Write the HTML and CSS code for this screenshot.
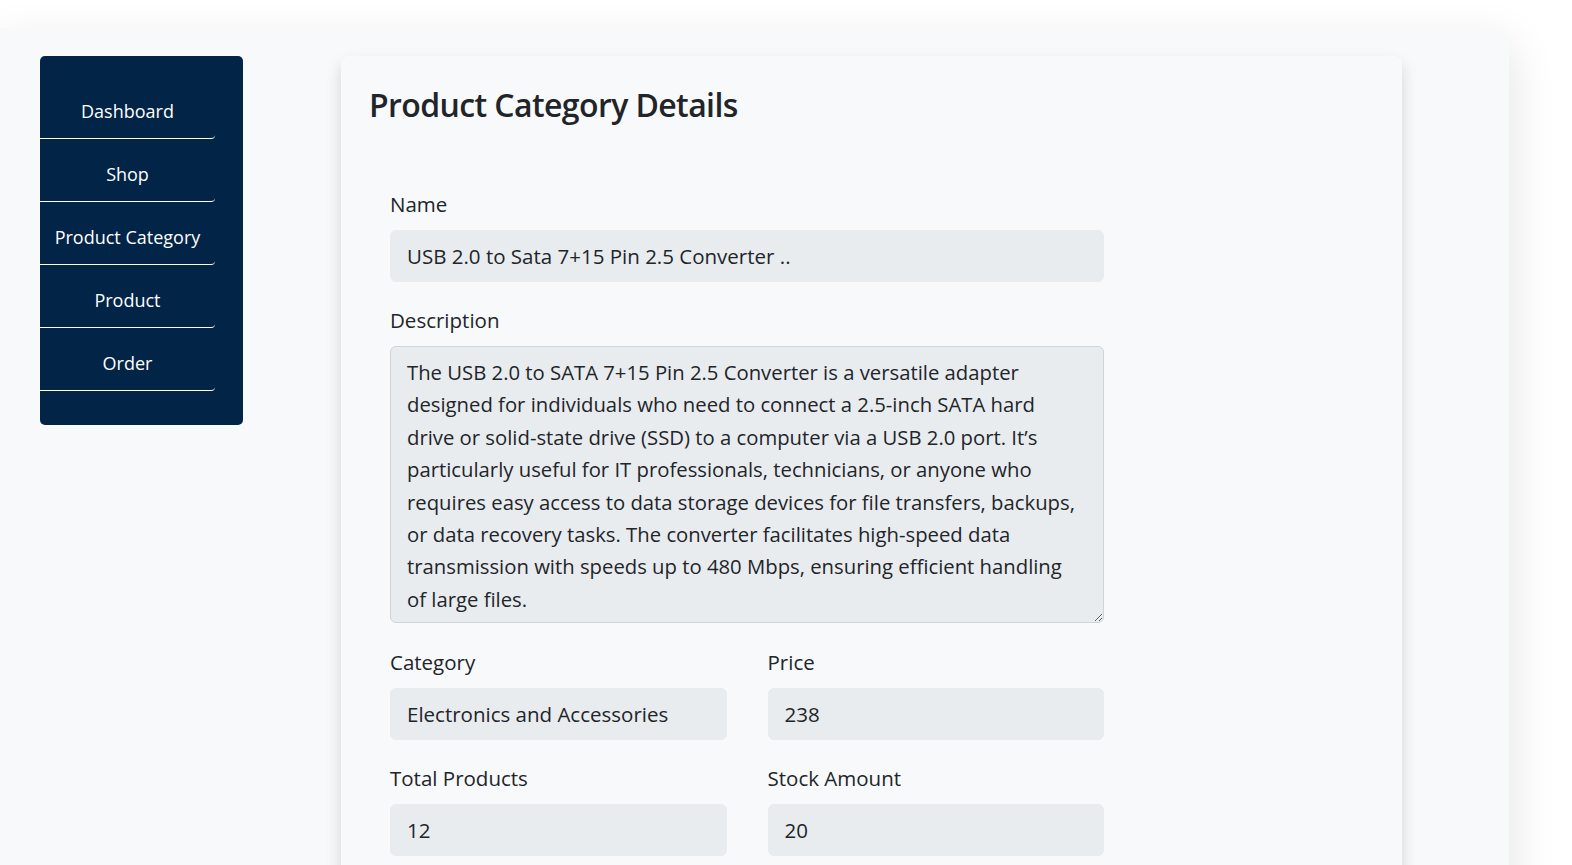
FILE: index.html
```html
<!DOCTYPE html>
<html lang="en">
<head>
<meta charset="utf-8">
<title>Product Category Details</title>
<link rel="stylesheet" href="styles.css">
</head>
<body>
<div class="shell">
  <aside class="sidebar">
    <nav class="nav">
      <a class="nav-item" href="#">Dashboard</a>
      <a class="nav-item" href="#">Shop</a>
      <a class="nav-item" href="#">Product Category</a>
      <a class="nav-item" href="#">Product</a>
      <a class="nav-item" href="#">Order</a>
    </nav>
  </aside>
  <main class="card">
    <h2 class="card-title">Product Category Details</h2>
    <form class="form">
      <div class="group">
        <label class="label">Name</label>
        <input class="control" type="text" readonly value="USB 2.0 to Sata 7+15 Pin 2.5 Converter ..">
      </div>
      <div class="group">
        <label class="label">Description</label>
        <textarea class="control area" readonly>The USB 2.0 to SATA 7+15 Pin 2.5 Converter is a versatile adapter
designed for individuals who need to connect a 2.5-inch SATA hard
drive or solid-state drive (SSD) to a computer via a USB 2.0 port. It’s
particularly useful for IT professionals, technicians, or anyone who
requires easy access to data storage devices for file transfers, backups,
or data recovery tasks. The converter facilitates high-speed data
transmission with speeds up to 480 Mbps, ensuring efficient handling
of large files.</textarea>
      </div>
      <div class="row">
        <div class="group">
          <label class="label">Category</label>
          <input class="control" type="text" readonly value="Electronics and Accessories">
        </div>
        <div class="group">
          <label class="label">Price</label>
          <input class="control" type="text" readonly value="238">
        </div>
      </div>
      <div class="row">
        <div class="group">
          <label class="label">Total Products</label>
          <input class="control" type="text" readonly value="12">
        </div>
        <div class="group">
          <label class="label">Stock Amount</label>
          <input class="control" type="text" readonly value="20">
        </div>
      </div>
    </form>
  </main>
</div>
</body>
</html>
```

FILE: styles.css
```css
* { box-sizing: border-box; }
html, body { margin: 0; padding: 0; background: #ffffff; overflow: hidden; }
body {
  font-family: "Open Sans", "Noto Sans", sans-serif;
  color: #212529;
}
.shell {
  margin-top: 28px;
  width: 1509px;
  min-height: 900px;
  background: #f8f9fa;
  border-radius: 0 10px 0 0;
  box-shadow: 0 1rem 3rem rgba(0, 0, 0, 0.12);
  padding: 28px 0 0 40px;
  display: flex;
  align-items: flex-start;
  gap: 98px;
}
.sidebar {
  width: 203px;
  height: 369px;
  flex: none;
  background: #022447;
  border-radius: 5px;
  padding: 20px 0 0 0;
}
.nav { display: flex; flex-direction: column; width: 175px; }
.nav-item {
  display: block;
  height: 63px;
  padding-top: 21.5px;
  line-height: 27px;
  text-align: center;
  color: #ffffff;
  text-decoration: none;
  font-size: 18px;
  border-bottom: 1px solid #ffffff;
  border-radius: 0 0 4px 0;
}
.card {
  width: 1061px;
  min-height: 880px;
  flex: none;
  background: #f8f9fa;
  border-radius: 8px;
  box-shadow: 0 0.5rem 1rem rgba(0, 0, 0, 0.15);
  padding: 28px;
}
.card-title {
  margin: 0 0 62.5px 0;
  font-size: 32px;
  line-height: 41.5px;
  font-weight: 600;
  letter-spacing: -0.6px;
  color: #212529;
}
.form { margin-left: 21px; width: 714px; }
.group { margin-bottom: 22.6px; }
.label {
  display: block;
  font-size: 20.5px;
  line-height: 32.4px;
  margin-bottom: 9.6px;
}
.control {
  display: block;
  width: 100%;
  height: 51.8px;
  padding: 8.6px 16px;
  font-family: inherit;
  font-size: 20.5px;
  line-height: 32.4px;
  color: #212529;
  background: #e9ecef;
  border: 1px solid #e9ecef;
  border-radius: 6px;
  outline: none;
}
.area {
  height: 277px;
  font-size: 20.3px;
  border-color: #ced4da;
  resize: vertical;
  overflow: hidden;
  white-space: pre-wrap;
}
.row {
  display: grid;
  grid-template-columns: 1fr 1fr;
  column-gap: 41px;
}
```
